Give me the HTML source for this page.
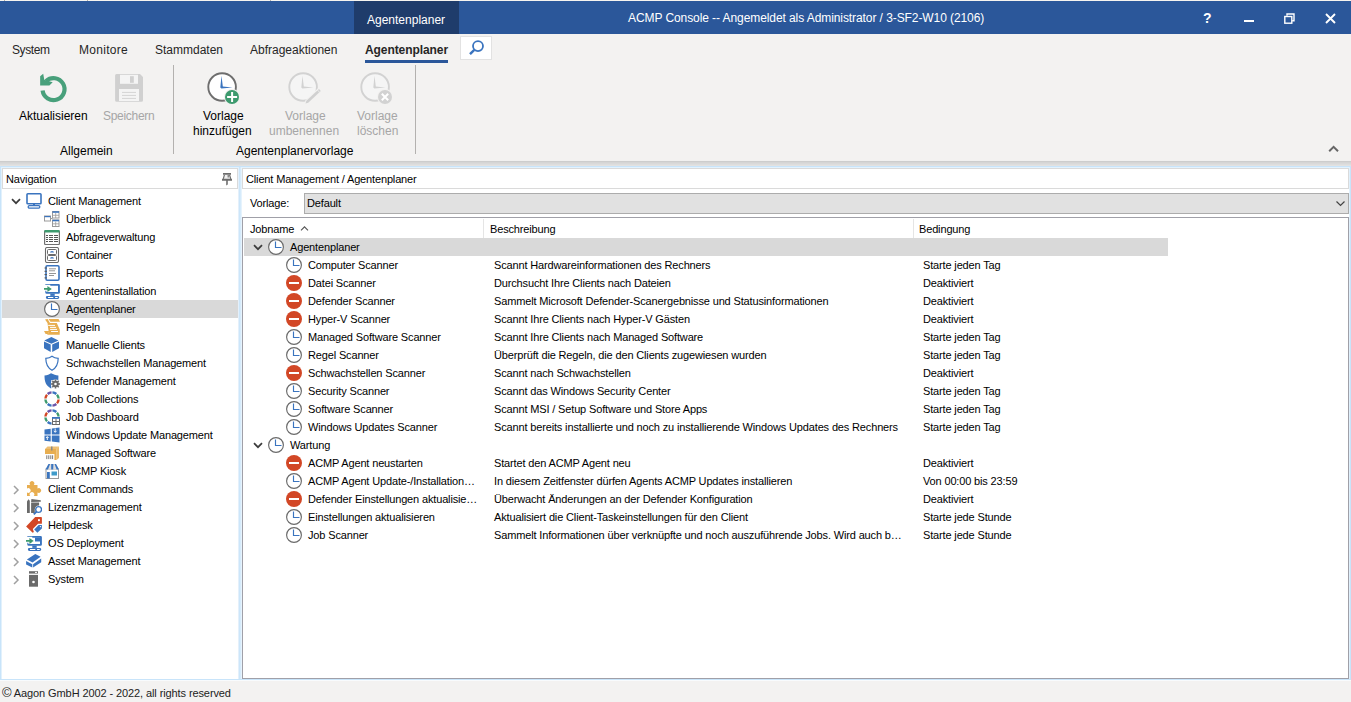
<!DOCTYPE html>
<html><head><meta charset="utf-8">
<style>
*{box-sizing:border-box;margin:0;padding:0}
html,body{width:1351px;height:702px;overflow:hidden;background:#f3f2f1;font-family:"Liberation Sans",sans-serif;color:#000}
.a{position:absolute;white-space:nowrap}
.t11{font-size:11px;letter-spacing:-0.15px;line-height:18px;height:18px}
.t12{font-size:12px;line-height:15px}
#title{left:0;top:1px;width:1351px;height:33px;background:#2b579a}
#topstrip{left:0;top:0;width:1351px;height:1px;background:#f6f4f0}
.menu{font-size:12px;line-height:16px;top:42px;color:#262626}
.dis{color:#a6a6a6}
.row{position:absolute;height:18px;line-height:18px;font-size:11px;letter-spacing:-0.15px;white-space:nowrap;color:#000}
</style></head><body>
<div class="a" id="topstrip"></div><div class="a" style="left:4px;top:0;width:1px;height:1px;background:#b4aea8"></div><div class="a" style="left:87px;top:0;width:1px;height:1px;background:#b4aea8"></div><div class="a" style="left:270px;top:0;width:1px;height:1px;background:#b4aea8"></div>
<div class="a" id="title"></div>
<div class="a" style="left:354px;top:1px;width:105px;height:33px;background:#1f3c6b"></div>
<div class="a" style="left:367px;top:12px;font-size:12px;line-height:16px;color:#fff">Agentenplaner</div>
<div class="a" style="left:628px;top:10px;font-size:12px;line-height:16px;color:#fff;letter-spacing:-0.08px">ACMP Console -- Angemeldet als Administrator / 3-SF2-W10 (2106)</div>

<!-- menu -->
<div class="a menu" style="left:12px;letter-spacing:-0.4px">System</div>
<div class="a menu" style="left:79px;letter-spacing:0.3px">Monitore</div>
<div class="a menu" style="left:155px">Stammdaten</div>
<div class="a menu" style="left:250px">Abfrageaktionen</div>
<div class="a menu" style="left:365px;font-weight:bold;letter-spacing:-0.08px">Agentenplaner</div>
<div class="a" style="left:365px;top:60px;width:83px;height:3px;background:#2b579a"></div>
<div class="a" style="left:460px;top:36px;width:32px;height:24px;background:#fff;border:1px solid #e2e2e2"></div>

<!-- ribbon -->
<div class="a t12" style="left:19px;top:109px">Aktualisieren</div>
<div class="a t12 dis" style="left:103px;top:109px;letter-spacing:-0.3px">Speichern</div>
<div class="a t12" style="left:60px;top:144px">Allgemein</div>
<div class="a" style="left:173px;top:65px;width:1px;height:89px;background:#b3b1af"></div>
<div class="a t12" style="left:203px;top:109px">Vorlage</div>
<div class="a t12" style="left:193px;top:124px">hinzufügen</div>
<div class="a t12 dis" style="left:285px;top:109px">Vorlage</div>
<div class="a t12 dis" style="left:269px;top:124px">umbenennen</div>
<div class="a t12 dis" style="left:357px;top:109px">Vorlage</div>
<div class="a t12 dis" style="left:357px;top:124px">löschen</div>
<div class="a t12" style="left:236px;top:144px">Agentenplanervorlage</div>
<div class="a" style="left:415px;top:65px;width:1px;height:89px;background:#b3b1af"></div>


<!-- title controls -->
<div class="a" style="left:1203px;top:10px;font-size:14px;line-height:16px;font-weight:bold;color:#fff">?</div>
<div class="a" style="left:1244px;top:20px;width:10px;height:2px;background:#fff"></div>
<svg class="a" style="left:1284px;top:13px" width="11" height="11" viewBox="0 0 11 11"><path d="M3 2.8V1h7v6.8H8.2" fill="none" stroke="#fff" stroke-width="1.4"/><rect x="0.8" y="3.5" width="7" height="6.7" fill="none" stroke="#fff" stroke-width="1.4"/></svg>
<svg class="a" style="left:1325px;top:13px" width="11" height="11" viewBox="0 0 11 11"><path d="M1 1l9 9M10 1l-9 9" stroke="#fff" stroke-width="1.9"/></svg>
<!-- search icon -->
<svg class="a" style="left:461px;top:37px" width="30" height="22" viewBox="0 0 30 22"><circle cx="17" cy="9.1" r="5" fill="none" stroke="#3a74bf" stroke-width="1.8"/><path d="M13.3 12.8L9 17.2" stroke="#3a74bf" stroke-width="2.4"/></svg>
<!-- ribbon icons -->
<svg class="a" style="left:34px;top:70px" width="36" height="36" viewBox="0 0 36 36"><path d="M8.6 20.5A11 11 0 1 0 12.1 11" fill="none" stroke="#48a07b" stroke-width="4.2"/><path d="M6.15 6.15L9.2 3.85 10.3 9.8 18.7 12.3 15.4 15.6H6.15z" fill="#48a07b"/></svg>
<svg class="a" style="left:110px;top:70px" width="38" height="36" viewBox="0 0 38 36"><path d="M6.5 4h23.5l3 3v23.3a1.5 1.5 0 0 1-1.5 1.5H6.6a1.5 1.5 0 0 1-1.5-1.5V5.5A1.5 1.5 0 0 1 6.5 4z" fill="#d0d0d0"/><rect x="10" y="4.8" width="18" height="9" fill="#f4f4f4"/><rect x="20" y="6.2" width="3.8" height="6.6" fill="#d0d0d0"/><rect x="9" y="19" width="20" height="12" fill="#f4f4f4"/><path d="M12 22.4h14M12 25.4h14M12 28.4h14" stroke="#d4d4d4" stroke-width="1"/></svg>
<svg class="a" style="left:203px;top:68px" width="40" height="38" viewBox="0 0 40 38"><circle cx="19.1" cy="19" r="13.8" fill="#fff" stroke="#6e6e6e" stroke-width="1.9"/><path d="M18.5 7.7L19.8 18.6L29.5 19.4L18.4 20.6L17.3 19.5z" fill="#3a74bf"/><circle cx="29" cy="29" r="8" fill="#f3f2f1"/><circle cx="29" cy="29" r="7" fill="#3d9a6e"/><rect x="24.1" y="28" width="10" height="2" fill="#fff"/><rect x="28.1" y="24" width="2" height="10" fill="#fff"/></svg>
<svg class="a" style="left:284px;top:68px" width="40" height="38" viewBox="0 0 40 38"><circle cx="19.1" cy="19" r="13.8" fill="#f5f5f5" stroke="#d2d2d2" stroke-width="1.9"/><path d="M18.5 7.7L19.8 18.6L29.5 19.4L18.4 20.6L17.3 19.5z" fill="#d2d2d2"/><path d="M34.2 20L37.6 23.6 24.6 35.8 20.6 36.6 21.6 32.2Z" fill="#f3f2f1"/><path d="M35 21.05L36.8 22.95 24.2 34.65 21.5 35.4 22.4 32.75Z" fill="#d0d0d0"/><path d="M33.6 22.1L35.6 24.3" stroke="#f3f2f1" stroke-width="0.8"/></svg>
<svg class="a" style="left:356px;top:68px" width="40" height="38" viewBox="0 0 40 38"><circle cx="19.1" cy="19" r="13.8" fill="#f5f5f5" stroke="#d2d2d2" stroke-width="1.9"/><path d="M18.5 7.7L19.8 18.6L29.5 19.4L18.4 20.6L17.3 19.5z" fill="#d2d2d2"/><circle cx="29" cy="29" r="8" fill="#f3f2f1"/><circle cx="29" cy="29" r="7" fill="#d2d2d2"/><path d="M25.8 25.8l6.4 6.4M32.2 25.8l-6.4 6.4" stroke="#fff" stroke-width="2"/></svg>
<svg class="a" style="left:1328px;top:145px" width="12" height="8" viewBox="0 0 12 8"><path d="M1.2 6.2L5.6 1.8 10 6.2" fill="none" stroke="#666" stroke-width="2"/></svg>

<!-- shadow -->
<div class="a" style="left:0;top:160px;width:1351px;height:1px;background:#f1f0ef"></div>
<div class="a" style="left:0;top:161px;width:1351px;height:5px;background:linear-gradient(#cdcdcd 0,#cdcdcd 1px,#d5d5d5 1px,#d5d5d5 2px,#d9d9d9 2px,#d9d9d9 3px,#dddddd 3px,#dddddd 4px,#e3e2e1 4px)"></div>
<!-- panels -->
<div class="a" style="left:0;top:166px;width:1351px;height:515px;background:#fff"></div>
<div class="a" style="left:0;top:166px;width:1351px;height:1px;background:#c8e4fa"></div>
<div class="a" style="left:0;top:167px;width:1351px;height:1px;background:#e3f2fd"></div>
<div class="a" style="left:0;top:166px;width:1px;height:514px;background:#c8e4fa"></div>
<div class="a" style="left:1px;top:167px;width:1px;height:512px;background:#e2f1fc"></div>
<div class="a" style="left:238px;top:167px;width:4px;height:512px;background:linear-gradient(90deg,#e4f0fb 0,#e4f0fb 1px,#cce6fa 1px,#cce6fa 2px,#d6ebfb 2px,#d6ebfb 3px,#e6f3fd 3px)"></div>
<div class="a" style="left:1349px;top:167px;width:1px;height:512px;background:#e0f0fc"></div>
<div class="a" style="left:1350px;top:166px;width:1px;height:514px;background:#c8e4fa"></div>
<div class="a" style="left:0;top:679px;width:1351px;height:1px;background:#c8e4fa"></div>
<div class="a" style="left:0;top:680px;width:1351px;height:1px;background:#f8fbfd"></div>

<!-- nav header -->
<div class="a" style="left:2px;top:168px;width:236px;height:21px;border:1px solid #dadada;background:#fff"></div>
<div class="a t11" style="left:6px;top:170px">Navigation</div>
<svg class="a" style="left:221px;top:172px" width="12" height="14" viewBox="0 0 12 14"><path d="M3.2 2.6h5.6l1 4.3H2.2z" fill="#f0f0f0"/><rect x="6.5" y="3" width="1.6" height="2.5" fill="#8a8a8a"/><path d="M2 1h8v1.8H2z M1 6.8h10v2H1z M5.2 8.8h1.6V12.6l-1.6 0.8z" fill="#6d6d6d"/><path d="M3.4 2.8L2.3 6.8M8.6 2.8L9.7 6.8" stroke="#6d6d6d" stroke-width="1.2"/></svg>
<div class="a" style="left:2px;top:300px;width:236px;height:18px;background:#d9d9d9"></div>
<svg class="a" style="left:11px;top:198px" width="10" height="7" viewBox="0 0 10 7"><path d="M1 1.2l4 4 4-4" fill="none" stroke="#3c3c3c" stroke-width="1.7"/></svg>
<svg class="a" style="left:26px;top:193px" width="16" height="16" viewBox="0 0 16 16"><rect x="1" y="0.8" width="14" height="10" rx="0.8" fill="none" stroke="#3a74bf" stroke-width="1.6"/><rect x="7" y="11" width="2" height="2" fill="#3a74bf"/><rect x="2.2" y="12.6" width="11.6" height="2.6" rx="1.1" fill="none" stroke="#3a74bf" stroke-width="1.3"/></svg>
<div class="row" style="left:48px;top:192px">Client Management</div>
<svg class="a" style="left:44px;top:211px" width="16" height="16" viewBox="0 0 16 16"><rect x="0.5" y="5" width="6" height="5" fill="none" stroke="#9a9a9a" stroke-width="1"/><rect x="0.5" y="5" width="6" height="1.2" fill="#3a74bf"/><rect x="8.5" y="0.5" width="6.5" height="6.5" fill="none" stroke="#9a9a9a" stroke-width="1"/><rect x="8.5" y="0.3" width="6.5" height="1.5" fill="#3a74bf"/><path d="M11.7 2v5M9 4.3h6" stroke="#9a9a9a" stroke-width="0.8"/><rect x="8.5" y="9" width="6.5" height="6.5" fill="none" stroke="#9a9a9a" stroke-width="1"/><rect x="8.5" y="8.8" width="6.5" height="1.5" fill="#3a74bf"/><path d="M11.7 10.5v5M9 12.8h6" stroke="#9a9a9a" stroke-width="0.8"/><path d="M6.5 7.5h2" stroke="#9a9a9a"/></svg>
<div class="row" style="left:66px;top:210px">Überblick</div>
<svg class="a" style="left:44px;top:229px" width="16" height="16" viewBox="0 0 16 16"><rect x="0.6" y="1.6" width="14.8" height="14" rx="1.2" fill="#fff" stroke="#707070" stroke-width="1.2"/><path d="M1.2 1h13.6a0.8 0.8 0 0 1 0.8 0.8V3.5H0.4V1.8A0.8 0.8 0 0 1 1.2 1z" fill="#3d9a6e"/><path d="M2 6.5h2M5 6.5h4M10 6.5h4M2 8.5h2M5 8.5h4M10 8.5h4M2 10.5h2M5 10.5h4M10 10.5h4M2 12.5h2M5 12.5h4M10 12.5h4" stroke="#555" stroke-width="1"/></svg>
<div class="row" style="left:66px;top:228px">Abfrageverwaltung</div>
<svg class="a" style="left:44px;top:247px" width="16" height="16" viewBox="0 0 16 16"><rect x="1.5" y="0.5" width="13" height="15" rx="1.5" fill="#fff" stroke="#6a6a6a" stroke-width="1.1"/><rect x="3.5" y="2.5" width="9" height="5" rx="1" fill="#fff" stroke="#6a6a6a" stroke-width="1"/><rect x="3.5" y="8.5" width="9" height="5" rx="1" fill="#fff" stroke="#6a6a6a" stroke-width="1"/><path d="M6 5.5a2 1.6 0 0 1 4 0z M6 11.5a2 1.6 0 0 1 4 0z" fill="#3a74bf"/></svg>
<div class="row" style="left:66px;top:246px">Container</div>
<svg class="a" style="left:44px;top:265px" width="16" height="16" viewBox="0 0 16 16"><rect x="2" y="0.8" width="13" height="14.4" rx="1.2" fill="#fff" stroke="#3a74bf" stroke-width="1.6"/><path d="M5 3.8h7M5 5.8h6M5 8.5h7M5 10.5h5" stroke="#8a8a8a" stroke-width="0.9"/><path d="M0.5 3h2.5M0.5 6.3h2.5M0.5 9.6h2.5M0.5 12.9h2.5" stroke="#555" stroke-width="1"/></svg>
<div class="row" style="left:66px;top:264px">Reports</div>
<svg class="a" style="left:44px;top:283px" width="16" height="16" viewBox="0 0 16 16"><path d="M1.3 0.9H6.3V1.8H1.3z M6.3 0.9H14.6A1.3 1.3 0 0 1 15.9 2.2V9.4A1.3 1.3 0 0 1 14.6 10.7H2.6A1.3 1.3 0 0 1 1.3 9.4V7.7H2.4V9H14V2.8H6.3z" fill="#3a74bf"/><rect x="6.3" y="10.6" width="4.4" height="2.3" fill="#3a74bf"/><path d="M3.3 13H13.8A1.45 1.45 0 0 1 13.8 15.9H3.3A1.45 1.45 0 0 1 3.3 13z M4 14.1V14.9H9.3V14.1z M11.1 14.1V14.9H13.7V14.1z" fill="#3a74bf" fill-rule="evenodd"/><path d="M0 5H3.4V3.1L7.8 5.9 3.4 8.9V6.8H0z" fill="#3d9a6e"/></svg>
<div class="row" style="left:66px;top:282px">Agenteninstallation</div>
<svg class="a" style="left:44px;top:301px" width="16" height="16" viewBox="0 0 16 16"><circle cx="8" cy="8" r="7.4" fill="#fff" stroke="#6a6a6a" stroke-width="1.15"/><path d="M7.5 2.6v5.9h6" fill="none" stroke="#3a74bf" stroke-width="1.15"/></svg>
<div class="row" style="left:66px;top:300px">Agentenplaner</div>
<svg class="a" style="left:44px;top:319px" width="16" height="16" viewBox="0 0 16 16"><path d="M4.5 0H14.5L16 2.8H6.5Z M1 0.6L3.6 0.1 6 4.1H3.5Z M3.5 4.1H12.8L15.8 10.8 15.7 15.8H3L4.8 13.8Z M0 12H5.4L3.8 14.9 1.6 15Z" fill="#e8ae50"/><path d="M4.2 6.4H11M6 8.4H12.1M6.1 10.4H13M7.1 12.5H14" stroke="#fff" stroke-width="1"/></svg>
<div class="row" style="left:66px;top:318px">Regeln</div>
<svg class="a" style="left:44px;top:337px" width="16" height="16" viewBox="0 0 16 16"><path d="M7.4 0L14.5 3.6 7.4 6.7 0.3 3.6z M0 4.6L6.7 7.6V15.1L0 11.3z M8.2 7.6L15 4.6V11.3L8.2 15.1z" fill="#3a74bf"/></svg>
<div class="row" style="left:66px;top:336px">Manuelle Clients</div>
<svg class="a" style="left:44px;top:355px" width="16" height="16" viewBox="0 0 16 16"><path d="M8 1.2c-1.6 1.3-3.8 2-6.2 2.1 0 5.5 1 9.2 6.2 12 5.2-2.8 6.2-6.5 6.2-12-2.4-0.1-4.6-0.8-6.2-2.1z" fill="#fff" stroke="#3a74bf" stroke-width="1.2"/></svg>
<div class="row" style="left:66px;top:354px">Schwachstellen Management</div>
<svg class="a" style="left:44px;top:373px" width="16" height="16" viewBox="0 0 16 16"><path d="M7 0.3C5.4 1.6 3.2 2.3 0.5 2.4 0.5 8.5 1.8 12.3 7 15.5L7.3 15.3V7H14.3C14.4 5.6 14.4 4.1 14.4 2.4 11.8 2.3 9.6 1.6 7 0.3z" fill="#3a74bf"/><g transform="translate(11.5,11)"><circle r="4.6" fill="#fff"/><circle r="3.3" fill="#6a6a6a"/><path d="M0-4.5v9M-4.5 0h9M-3.2 -3.2l6.4 6.4M3.2 -3.2l-6.4 6.4" stroke="#6a6a6a" stroke-width="1.6"/><circle r="1.3" fill="#fff"/></g></svg>
<div class="row" style="left:66px;top:372px">Defender Management</div>
<svg class="a" style="left:44px;top:391px" width="16" height="16" viewBox="0 0 16 16"><g fill="none" stroke-width="2.4"><path d="M8.46 1.42A6.6 6.6 0 0 1 12.33 3.02" stroke="#3a74bf"/><path d="M12.98 3.67A6.6 6.6 0 0 1 14.58 7.54" stroke="#3d9a6e"/><path d="M14.58 8.46A6.6 6.6 0 0 1 12.98 12.33" stroke="#d24726"/><path d="M12.33 12.98A6.6 6.6 0 0 1 8.46 14.58" stroke="#6b54a8"/><path d="M7.54 14.58A6.6 6.6 0 0 1 3.67 12.98" stroke="#3a74bf"/><path d="M3.02 12.33A6.6 6.6 0 0 1 1.42 8.46" stroke="#3d9a6e"/><path d="M1.42 7.54A6.6 6.6 0 0 1 3.02 3.67" stroke="#d24726"/><path d="M3.67 3.02A6.6 6.6 0 0 1 7.54 1.42" stroke="#6b54a8"/></g></svg>
<div class="row" style="left:66px;top:390px">Job Collections</div>
<svg class="a" style="left:44px;top:409px" width="16" height="16" viewBox="0 0 16 16"><g fill="none" stroke-width="2.4"><path d="M8.46 1.42A6.6 6.6 0 0 1 12.33 3.02" stroke="#3a74bf"/><path d="M12.98 3.67A6.6 6.6 0 0 1 14.58 7.54" stroke="#3d9a6e"/><path d="M7.54 14.58A6.6 6.6 0 0 1 3.67 12.98" stroke="#3a74bf"/><path d="M3.02 12.33A6.6 6.6 0 0 1 1.42 8.46" stroke="#3d9a6e"/><path d="M1.42 7.54A6.6 6.6 0 0 1 3.02 3.67" stroke="#d24726"/><path d="M3.67 3.02A6.6 6.6 0 0 1 7.54 1.42" stroke="#6b54a8"/></g><rect x="8.5" y="8.5" width="7" height="7" fill="#fff" stroke="#6a6a6a" stroke-width="1"/><rect x="8" y="8" width="8" height="1.8" fill="#3a74bf"/><path d="M12 9.5v6M9 12.5h6" stroke="#6a6a6a" stroke-width="1"/></svg>
<div class="row" style="left:66px;top:408px">Job Dashboard</div>
<svg class="a" style="left:44px;top:427px" width="16" height="16" viewBox="0 0 16 16"><path d="M0.5 2.5l6.2-0.8V7.5H0.5zM7.8 1.5l7.7-1v7H7.8zM0.5 8.5h6.2v6L0.5 13.8zM7.8 8.5h7.7v7l-7.7-1z" fill="#3a74bf"/><path d="M11.2 1.5v3.5M9.8 3.8l1.4 1.6 1.4-1.6M3.3 13v-3M2 11l1.3-1.5 1.3 1.5" fill="none" stroke="#fff" stroke-width="0.9"/></svg>
<div class="row" style="left:66px;top:426px">Windows Update Management</div>
<svg class="a" style="left:44px;top:445px" width="16" height="16" viewBox="0 0 16 16"><path d="M1 4h11.5v11H1z" fill="#e8ae50"/><path d="M12.5 4l2.5-2.5V13l-2.5 2z" fill="#e8ae50" opacity="0.85"/><path d="M3.5 1.5H15L12.5 4H1z" fill="#e8ae50" opacity="0.8"/><rect x="7" y="1.5" width="1.5" height="4" fill="#8a8a8a"/><rect x="1" y="9" width="9.4" height="6.2" fill="#fff"/><path d="M2.8 10.3v3.8M4.8 10.3v3.8M6.8 10.3v3.8M8.6 10.3v3.8" stroke="#6a6a6a" stroke-width="0.9"/></svg>
<div class="row" style="left:66px;top:444px">Managed Software</div>
<svg class="a" style="left:44px;top:463px" width="16" height="16" viewBox="0 0 16 16"><rect x="2" y="6" width="12.5" height="9.5" fill="#fff" stroke="#9a9a9a" stroke-width="1"/><rect x="3" y="9" width="2.8" height="6.5" fill="#3a74bf"/><rect x="7.5" y="8.5" width="5.5" height="4" fill="#3f9bc9"/><path d="M1.5 6.5L4.5 1h7.5l3 5.5z" fill="#ddd"/><path d="M1.5 6.5L4.5 1h1.6L4 6.5zM7.2 1h2.2L9.2 6.5H7.2zM10.6 1h1.4l3 5.5h-2.4z" fill="#3a74bf"/></svg>
<div class="row" style="left:66px;top:462px">ACMP Kiosk</div>
<svg class="a" style="left:13px;top:485px" width="7" height="10" viewBox="0 0 7 10"><path d="M1 1l4 4-4 4" fill="none" stroke="#a0a0a0" stroke-width="1.5"/></svg>
<svg class="a" style="left:26px;top:481px" width="16" height="16" viewBox="0 0 16 16"><path d="M1 4H4.3A2.3 2.3 0 1 1 7.7 4H11.5V7.6A2.3 2.3 0 1 1 11.5 11.4V15H7.7A2.3 2.3 0 1 0 4.3 15H1V11.4A2.3 2.3 0 1 0 1 7.6Z" fill="#e8ae50"/></svg>
<div class="row" style="left:48px;top:480px">Client Commands</div>
<svg class="a" style="left:13px;top:503px" width="7" height="10" viewBox="0 0 7 10"><path d="M1 1l4 4-4 4" fill="none" stroke="#a0a0a0" stroke-width="1.5"/></svg>
<svg class="a" style="left:26px;top:499px" width="16" height="16" viewBox="0 0 16 16"><path d="M1 2.6L2.4 0.2 3.8 1.8V13.9H1z M5.1 3.6H13.1V6.6A3.9 3.9 0 0 0 8.8 10.9V13.9H5.1z M5.4 0.1L14.8 1.3V2.7L5.1 3z" fill="#6a6a6a"/><circle cx="12.6" cy="10.5" r="2.9" fill="#fff" stroke="#3a74bf" stroke-width="1.4"/><path d="M10.5 12.6L7.8 15.3" stroke="#3a74bf" stroke-width="1.9"/></svg>
<div class="row" style="left:48px;top:498px">Lizenzmanagement</div>
<svg class="a" style="left:13px;top:521px" width="7" height="10" viewBox="0 0 7 10"><path d="M1 1l4 4-4 4" fill="none" stroke="#a0a0a0" stroke-width="1.5"/></svg>
<svg class="a" style="left:26px;top:517px" width="16" height="16" viewBox="0 0 16 16"><path d="M9.2 0H15.1A0.8 0.8 0 0 1 15.9 0.8V6.7H12L6.8 12 7.9 14.9 6.7 15.8 0.1 9.5Z" fill="#d24726"/><rect x="12" y="2.2" width="1.9" height="1.9" fill="#fff"/><path d="M8.2 12.4L12.6 8.1H15.9V11.4L11.4 15.8Z" fill="#3a74bf"/><circle cx="14.4" cy="9.6" r="0.7" fill="#fff"/></svg>
<div class="row" style="left:48px;top:516px">Helpdesk</div>
<svg class="a" style="left:13px;top:539px" width="7" height="10" viewBox="0 0 7 10"><path d="M1 1l4 4-4 4" fill="none" stroke="#a0a0a0" stroke-width="1.5"/></svg>
<svg class="a" style="left:26px;top:535px" width="16" height="16" viewBox="0 0 16 16"><path d="M1.3 0.9H6.3V1.8H1.3z M6.3 0.9H14.6A1.3 1.3 0 0 1 15.9 2.2V9.4A1.3 1.3 0 0 1 14.6 10.7H2.6A1.3 1.3 0 0 1 1.3 9.4V7.7H2.4V9H14V2.8H6.3z" fill="#3a74bf"/><rect x="6.3" y="10.6" width="4.4" height="2.3" fill="#3a74bf"/><path d="M3.3 13H13.8A1.45 1.45 0 0 1 13.8 15.9H3.3A1.45 1.45 0 0 1 3.3 13z M4 14.1V14.9H9.3V14.1z M11.1 14.1V14.9H13.7V14.1z" fill="#3a74bf" fill-rule="evenodd"/><path d="M0 5H3.4V3.1L7.8 5.9 3.4 8.9V6.8H0z" fill="#3d9a6e"/><path d="M9 2.5H14.2V6.7H9z" fill="#3a74bf"/><path d="M6.3 6.7H14V9H6.3z" fill="#fff"/></svg>
<div class="row" style="left:48px;top:534px">OS Deployment</div>
<svg class="a" style="left:13px;top:557px" width="7" height="10" viewBox="0 0 7 10"><path d="M1 1l4 4-4 4" fill="none" stroke="#a0a0a0" stroke-width="1.5"/></svg>
<svg class="a" style="left:26px;top:553px" width="16" height="16" viewBox="0 0 16 16"><path d="M9.3 1L14.6 3.7 6.5 9.5 0.9 6.6z M0.1 8L6.3 11.2V14.6L0.1 11.6z M7.1 11.2L15.2 5.4V9.2L7.1 14.6z" fill="#3a74bf"/></svg>
<div class="row" style="left:48px;top:552px">Asset Management</div>
<svg class="a" style="left:13px;top:575px" width="7" height="10" viewBox="0 0 7 10"><path d="M1 1l4 4-4 4" fill="none" stroke="#a0a0a0" stroke-width="1.5"/></svg>
<svg class="a" style="left:26px;top:571px" width="16" height="16" viewBox="0 0 16 16"><rect x="3" y="0.2" width="9" height="2.4" fill="#6a6a6a"/><rect x="9" y="0.9" width="2" height="1" fill="#fff"/><rect x="3" y="3.9" width="9" height="11.8" fill="#6a6a6a"/><circle cx="7.5" cy="11" r="1.3" fill="#fff"/></svg>
<div class="row" style="left:48px;top:570px">System</div>
<!-- right header -->
<div class="a" style="left:242px;top:168px;width:1107px;height:21px;border:1px solid #dadada;background:#fff"></div>
<div class="a t11" style="left:246px;top:170px">Client Management / Agentenplaner</div>
<div class="a t11" style="left:250px;top:194px">Vorlage:</div>
<div class="a" style="left:304px;top:193px;width:1045px;height:21px;border:1px solid #acacac;background:#e1e1e1"></div>
<div class="a t11" style="left:307px;top:194px">Default</div>
<svg class="a" style="left:1336px;top:201px" width="9" height="6" viewBox="0 0 9 6"><path d="M0.5 0.5l4 4 4-4" fill="none" stroke="#444" stroke-width="1.2"/></svg>
<div class="a" style="left:242px;top:217px;width:1107px;height:462px;border:1px solid #a0a0a8;background:#fff"></div>
<div class="a t11" style="left:250px;top:220px">Jobname</div>
<svg class="a" style="left:300px;top:226px" width="9" height="5" viewBox="0 0 9 5"><path d="M1 4.3l3.5-3.5 3.5 3.5" fill="none" stroke="#555" stroke-width="1.1"/></svg>
<div class="a" style="left:483px;top:219px;width:1px;height:19px;background:#e5e5e5"></div>
<div class="a t11" style="left:490px;top:220px">Beschreibung</div>
<div class="a" style="left:913px;top:219px;width:1px;height:19px;background:#e5e5e5"></div>
<div class="a t11" style="left:919px;top:220px">Bedingung</div>
<div class="a" style="left:244px;top:238px;width:924px;height:18px;background:#d9d9d9"></div>
<svg class="a" style="left:253px;top:244px" width="10" height="7" viewBox="0 0 10 7"><path d="M1 1.2l4 4 4-4" fill="none" stroke="#3c3c3c" stroke-width="1.7"/></svg>
<svg class="a" style="left:268px;top:239px" width="16" height="16" viewBox="0 0 16 16"><circle cx="8" cy="8" r="7.4" fill="#fff" stroke="#6a6a6a" stroke-width="1.15"/><path d="M7.5 2.6v5.9h6" fill="none" stroke="#3a74bf" stroke-width="1.15"/></svg>
<div class="row" style="left:290px;top:238px">Agentenplaner</div>
<svg class="a" style="left:286px;top:257px" width="16" height="16" viewBox="0 0 16 16"><circle cx="8" cy="8" r="7.4" fill="#fff" stroke="#6a6a6a" stroke-width="1.15"/><path d="M7.5 2.6v5.9h6" fill="none" stroke="#3a74bf" stroke-width="1.15"/></svg>
<div class="row" style="left:308px;top:256px">Computer Scanner</div>
<div class="row" style="left:494px;top:256px">Scannt Hardwareinformationen des Rechners</div>
<div class="row" style="left:923px;top:256px">Starte jeden Tag</div>
<svg class="a" style="left:286px;top:275px" width="16" height="16" viewBox="0 0 16 16"><circle cx="8" cy="8" r="8" fill="#d24726"/><rect x="3" y="7" width="10" height="2" fill="#fff"/></svg>
<div class="row" style="left:308px;top:274px">Datei Scanner</div>
<div class="row" style="left:494px;top:274px">Durchsucht Ihre Clients nach Dateien</div>
<div class="row" style="left:923px;top:274px">Deaktiviert</div>
<svg class="a" style="left:286px;top:293px" width="16" height="16" viewBox="0 0 16 16"><circle cx="8" cy="8" r="8" fill="#d24726"/><rect x="3" y="7" width="10" height="2" fill="#fff"/></svg>
<div class="row" style="left:308px;top:292px">Defender Scanner</div>
<div class="row" style="left:494px;top:292px">Sammelt Microsoft Defender-Scanergebnisse und Statusinformationen</div>
<div class="row" style="left:923px;top:292px">Deaktiviert</div>
<svg class="a" style="left:286px;top:311px" width="16" height="16" viewBox="0 0 16 16"><circle cx="8" cy="8" r="8" fill="#d24726"/><rect x="3" y="7" width="10" height="2" fill="#fff"/></svg>
<div class="row" style="left:308px;top:310px">Hyper-V Scanner</div>
<div class="row" style="left:494px;top:310px">Scannt Ihre Clients nach Hyper-V Gästen</div>
<div class="row" style="left:923px;top:310px">Deaktiviert</div>
<svg class="a" style="left:286px;top:329px" width="16" height="16" viewBox="0 0 16 16"><circle cx="8" cy="8" r="7.4" fill="#fff" stroke="#6a6a6a" stroke-width="1.15"/><path d="M7.5 2.6v5.9h6" fill="none" stroke="#3a74bf" stroke-width="1.15"/></svg>
<div class="row" style="left:308px;top:328px">Managed Software Scanner</div>
<div class="row" style="left:494px;top:328px">Scannt Ihre Clients nach Managed Software</div>
<div class="row" style="left:923px;top:328px">Starte jeden Tag</div>
<svg class="a" style="left:286px;top:347px" width="16" height="16" viewBox="0 0 16 16"><circle cx="8" cy="8" r="7.4" fill="#fff" stroke="#6a6a6a" stroke-width="1.15"/><path d="M7.5 2.6v5.9h6" fill="none" stroke="#3a74bf" stroke-width="1.15"/></svg>
<div class="row" style="left:308px;top:346px">Regel Scanner</div>
<div class="row" style="left:494px;top:346px">Überprüft die Regeln, die den Clients zugewiesen wurden</div>
<div class="row" style="left:923px;top:346px">Starte jeden Tag</div>
<svg class="a" style="left:286px;top:365px" width="16" height="16" viewBox="0 0 16 16"><circle cx="8" cy="8" r="8" fill="#d24726"/><rect x="3" y="7" width="10" height="2" fill="#fff"/></svg>
<div class="row" style="left:308px;top:364px">Schwachstellen Scanner</div>
<div class="row" style="left:494px;top:364px">Scannt nach Schwachstellen</div>
<div class="row" style="left:923px;top:364px">Deaktiviert</div>
<svg class="a" style="left:286px;top:383px" width="16" height="16" viewBox="0 0 16 16"><circle cx="8" cy="8" r="7.4" fill="#fff" stroke="#6a6a6a" stroke-width="1.15"/><path d="M7.5 2.6v5.9h6" fill="none" stroke="#3a74bf" stroke-width="1.15"/></svg>
<div class="row" style="left:308px;top:382px">Security Scanner</div>
<div class="row" style="left:494px;top:382px">Scannt das Windows Security Center</div>
<div class="row" style="left:923px;top:382px">Starte jeden Tag</div>
<svg class="a" style="left:286px;top:401px" width="16" height="16" viewBox="0 0 16 16"><circle cx="8" cy="8" r="7.4" fill="#fff" stroke="#6a6a6a" stroke-width="1.15"/><path d="M7.5 2.6v5.9h6" fill="none" stroke="#3a74bf" stroke-width="1.15"/></svg>
<div class="row" style="left:308px;top:400px">Software Scanner</div>
<div class="row" style="left:494px;top:400px">Scannt MSI / Setup Software und Store Apps</div>
<div class="row" style="left:923px;top:400px">Starte jeden Tag</div>
<svg class="a" style="left:286px;top:419px" width="16" height="16" viewBox="0 0 16 16"><circle cx="8" cy="8" r="7.4" fill="#fff" stroke="#6a6a6a" stroke-width="1.15"/><path d="M7.5 2.6v5.9h6" fill="none" stroke="#3a74bf" stroke-width="1.15"/></svg>
<div class="row" style="left:308px;top:418px">Windows Updates Scanner</div>
<div class="row" style="left:494px;top:418px">Scannt bereits installierte und noch zu installierende Windows Updates des Rechners</div>
<div class="row" style="left:923px;top:418px">Starte jeden Tag</div>
<svg class="a" style="left:253px;top:442px" width="10" height="7" viewBox="0 0 10 7"><path d="M1 1.2l4 4 4-4" fill="none" stroke="#3c3c3c" stroke-width="1.7"/></svg>
<svg class="a" style="left:268px;top:437px" width="16" height="16" viewBox="0 0 16 16"><circle cx="8" cy="8" r="7.4" fill="#fff" stroke="#6a6a6a" stroke-width="1.15"/><path d="M7.5 2.6v5.9h6" fill="none" stroke="#3a74bf" stroke-width="1.15"/></svg>
<div class="row" style="left:290px;top:436px">Wartung</div>
<svg class="a" style="left:286px;top:455px" width="16" height="16" viewBox="0 0 16 16"><circle cx="8" cy="8" r="8" fill="#d24726"/><rect x="3" y="7" width="10" height="2" fill="#fff"/></svg>
<div class="row" style="left:308px;top:454px">ACMP Agent neustarten</div>
<div class="row" style="left:494px;top:454px">Startet den ACMP Agent neu</div>
<div class="row" style="left:923px;top:454px">Deaktiviert</div>
<svg class="a" style="left:286px;top:473px" width="16" height="16" viewBox="0 0 16 16"><circle cx="8" cy="8" r="7.4" fill="#fff" stroke="#6a6a6a" stroke-width="1.15"/><path d="M7.5 2.6v5.9h6" fill="none" stroke="#3a74bf" stroke-width="1.15"/></svg>
<div class="row" style="left:308px;top:472px">ACMP Agent Update-/Installation…</div>
<div class="row" style="left:494px;top:472px">In diesem Zeitfenster dürfen Agents ACMP Updates installieren</div>
<div class="row" style="left:923px;top:472px">Von 00:00 bis 23:59</div>
<svg class="a" style="left:286px;top:491px" width="16" height="16" viewBox="0 0 16 16"><circle cx="8" cy="8" r="8" fill="#d24726"/><rect x="3" y="7" width="10" height="2" fill="#fff"/></svg>
<div class="row" style="left:308px;top:490px">Defender Einstellungen aktualisie…</div>
<div class="row" style="left:494px;top:490px">Überwacht Änderungen an der Defender Konfiguration</div>
<div class="row" style="left:923px;top:490px">Deaktiviert</div>
<svg class="a" style="left:286px;top:509px" width="16" height="16" viewBox="0 0 16 16"><circle cx="8" cy="8" r="7.4" fill="#fff" stroke="#6a6a6a" stroke-width="1.15"/><path d="M7.5 2.6v5.9h6" fill="none" stroke="#3a74bf" stroke-width="1.15"/></svg>
<div class="row" style="left:308px;top:508px">Einstellungen aktualisieren</div>
<div class="row" style="left:494px;top:508px">Aktualisiert die Client-Taskeinstellungen für den Client</div>
<div class="row" style="left:923px;top:508px">Starte jede Stunde</div>
<svg class="a" style="left:286px;top:527px" width="16" height="16" viewBox="0 0 16 16"><circle cx="8" cy="8" r="7.4" fill="#fff" stroke="#6a6a6a" stroke-width="1.15"/><path d="M7.5 2.6v5.9h6" fill="none" stroke="#3a74bf" stroke-width="1.15"/></svg>
<div class="row" style="left:308px;top:526px">Job Scanner</div>
<div class="row" style="left:494px;top:526px">Sammelt Informationen über verknüpfte und noch auszuführende Jobs. Wird auch b…</div>
<div class="row" style="left:923px;top:526px">Starte jede Stunde</div>
<!-- status -->
<div class="a" style="left:0;top:681px;width:1351px;height:21px;background:#f3f2f1"></div>
<div class="a t11" style="left:2px;top:684px;color:#222;letter-spacing:-0.1px"><span style="font-size:13px">©</span> Aagon GmbH 2002 - 2022, all rights reserved</div>
</body></html>
